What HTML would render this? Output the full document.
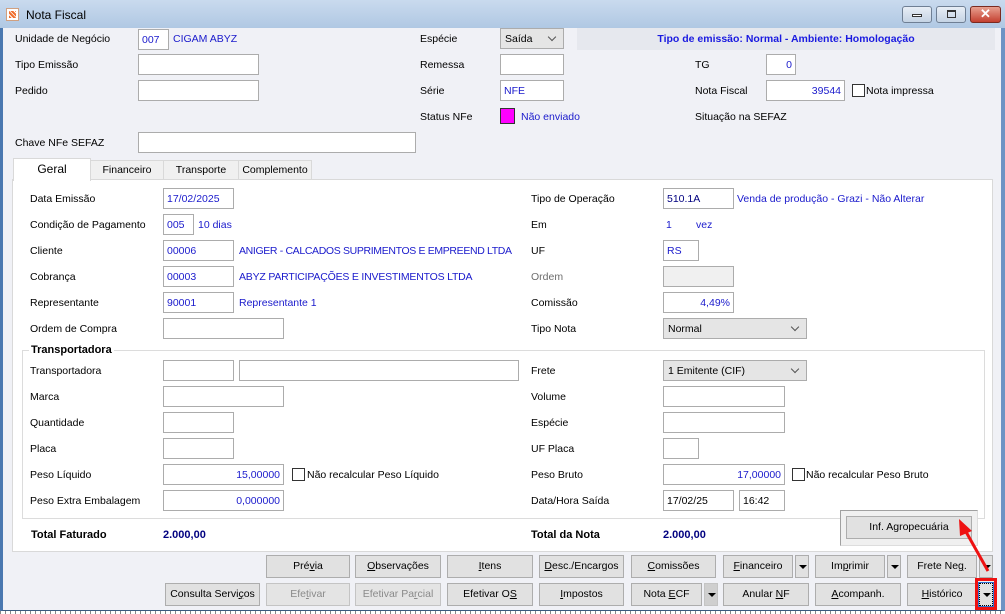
<!DOCTYPE html>
<html><head><meta charset="utf-8">
<style>
*{box-sizing:border-box;margin:0;padding:0}
body{width:1005px;height:614px;overflow:hidden;background:#fff;font-family:"Liberation Sans",sans-serif;font-size:10.5px;color:#000;position:relative}
.a{position:absolute;white-space:nowrap}
.win{position:absolute;left:0;top:0;width:1005px;height:611px;background:#f0f1f6;border:1px solid #3a5a80;border-left:3px solid #4a78b0;border-right:4px solid #6d93c4}
.tb{position:absolute;left:0;top:0;width:1005px;height:28px;background:linear-gradient(#c9daee,#b0c8e3)}
.in{position:absolute;height:21px;background:#fff;border:1px solid #acacac;color:#1a1acc;padding:0 3px;line-height:21px;white-space:nowrap}
.r{text-align:right}
.l{position:absolute;white-space:nowrap;transform:translateY(-50%)}
.blue{color:#1a1acc}
.sel{position:absolute;height:21px;background:#e5e5e5;border:1px solid #acacac;padding:0 4px;line-height:20px}
.sel:after{content:"";position:absolute;right:8px;top:5px;width:5px;height:5px;border-right:1px solid #555;border-bottom:1px solid #555;transform:rotate(45deg)}
.cb{position:absolute;width:13px;height:13px;border:1px solid #333;background:#fff}
.btn{position:absolute;height:23px;background:#e1e1e1;border:1px solid #adadad;text-align:center;line-height:21px;white-space:nowrap}
.dis{color:#8a8a8a;background:#e4e4e4;border-color:#c4c4c4}
.dd{position:absolute;width:14px;height:23px;background:#e1e1e1;border:1px solid #adadad}
.dd:after{content:"";position:absolute;left:3px;top:9px;border-left:4px solid transparent;border-right:4px solid transparent;border-top:4px solid #000}
.tab{position:absolute;top:160px;height:20px;background:#f0f0f0;border:1px solid #d9d9d9;text-align:center;line-height:18px}
.wb{position:absolute;top:6px;height:17px;border:1px solid #6f7f94;border-radius:3px;background:linear-gradient(#e8eef6,#c5d3e4)}
</style></head><body>
<div class="win"></div>
<div class="tb"></div>
<div class="a" style="left:6px;top:8px;width:13px;height:13px;background:#fff;border:1px solid #d0a080"><div style="margin:2px;width:7px;height:7px;background:repeating-linear-gradient(45deg,#f07030 0 2px,#fff 2px 3px)"></div></div>
<div class="a" style="left:26px;top:8px;font-size:12px">Nota Fiscal</div>
<div class="wb" style="left:902px;width:30px"><div style="margin:7px auto 0;width:10px;height:3px;border:1px solid #333;background:#fff"></div></div>
<div class="wb" style="left:936px;width:30px"><div style="margin:3px auto 0;width:9px;height:8px;border:1px solid #333;border-top-width:2px"></div></div>
<div class="wb" style="left:970px;width:31px;background:linear-gradient(#e8a090,#c44030);border-color:#7a2a20;color:#fff;text-align:center;font-weight:bold;font-size:13px;line-height:14px">✕</div>

<div class="l" style="left:15px;top:39px">Unidade de Negócio</div>
<div class="in" style="left:138px;top:29px;width:31px">007</div>
<div class="l blue" style="left:173px;top:39px">CIGAM ABYZ</div>
<div class="l" style="left:420px;top:39px">Espécie</div>
<div class="sel" style="left:500px;top:28px;width:64px">Saída</div>
<div class="a" style="left:577px;top:28px;width:418px;height:22px;background:#e6e8ee;color:#1a1ae0;font-weight:bold;text-align:center;line-height:22px">Tipo de emissão: Normal - Ambiente: Homologação</div>

<div class="l" style="left:15px;top:65px">Tipo Emissão</div>
<div class="in" style="left:138px;top:54px;width:121px"></div>
<div class="l" style="left:420px;top:65px">Remessa</div>
<div class="in" style="left:500px;top:54px;width:64px"></div>
<div class="l" style="left:695px;top:65px">TG</div>
<div class="in r" style="left:766px;top:54px;width:30px">0</div>

<div class="l" style="left:15px;top:91px">Pedido</div>
<div class="in" style="left:138px;top:80px;width:121px"></div>
<div class="l" style="left:420px;top:91px">Série</div>
<div class="in" style="left:500px;top:80px;width:64px">NFE</div>
<div class="l" style="left:695px;top:91px">Nota Fiscal</div>
<div class="in r" style="left:766px;top:80px;width:79px">39544</div>
<div class="cb" style="left:852px;top:84px"></div>
<div class="l" style="left:866px;top:91px">Nota impressa</div>

<div class="l" style="left:420px;top:117px">Status NFe</div>
<div class="a" style="left:500px;top:108px;width:15px;height:16px;background:#ff00ff;border:1px solid #333"></div>
<div class="l blue" style="left:521px;top:117px">Não enviado</div>
<div class="l" style="left:695px;top:117px">Situação na SEFAZ</div>

<div class="l" style="left:15px;top:143px">Chave NFe SEFAZ</div>
<div class="in" style="left:138px;top:132px;width:278px"></div>

<div class="a" style="left:12px;top:179px;width:981px;height:373px;background:#fff;border:1px solid #d9d9d9"></div>
<div class="tab" style="left:90px;width:74px">Financeiro</div>
<div class="tab" style="left:163px;width:76px">Transporte</div>
<div class="tab" style="left:238px;width:74px">Complemento</div>
<div class="tab" style="left:13px;top:158px;width:78px;height:23px;background:#fff;border-bottom:none;line-height:20px;font-size:12px">Geral</div>

<div class="l" style="left:30px;top:199px">Data Emissão</div>
<div class="in" style="left:163px;top:188px;width:71px">17/02/2025</div>
<div class="l" style="left:531px;top:199px">Tipo de Operação</div>
<div class="in" style="left:663px;top:188px;width:71px;color:#000080">510.1A</div>
<div class="l blue" style="left:737px;top:199px">Venda de produção - Grazi - Não Alterar</div>

<div class="l" style="left:30px;top:225px">Condição de Pagamento</div>
<div class="in" style="left:163px;top:214px;width:31px">005</div>
<div class="l blue" style="left:198px;top:225px">10 dias</div>
<div class="l" style="left:531px;top:225px">Em</div>
<div class="l blue" style="left:666px;top:225px">1</div>
<div class="l blue" style="left:696px;top:225px">vez</div>

<div class="l" style="left:30px;top:251px">Cliente</div>
<div class="in" style="left:163px;top:240px;width:71px">00006</div>
<div class="l blue" style="left:239px;top:251px;letter-spacing:-0.35px">ANIGER - CALCADOS SUPRIMENTOS E EMPREEND LTDA</div>
<div class="l" style="left:531px;top:251px">UF</div>
<div class="in" style="left:663px;top:240px;width:36px">RS</div>

<div class="l" style="left:30px;top:277px">Cobrança</div>
<div class="in" style="left:163px;top:266px;width:71px">00003</div>
<div class="l blue" style="left:239px;top:277px;letter-spacing:-0.2px">ABYZ PARTICIPAÇÕES E INVESTIMENTOS LTDA</div>
<div class="l" style="left:531px;top:277px;color:#6d6d6d">Ordem</div>
<div class="in" style="left:663px;top:266px;width:71px;background:#f0f0f0"></div>

<div class="l" style="left:30px;top:303px">Representante</div>
<div class="in" style="left:163px;top:292px;width:71px">90001</div>
<div class="l blue" style="left:239px;top:303px">Representante 1</div>
<div class="l" style="left:531px;top:303px">Comissão</div>
<div class="in r" style="left:663px;top:292px;width:71px">4,49%</div>

<div class="l" style="left:30px;top:329px">Ordem de Compra</div>
<div class="in" style="left:163px;top:318px;width:121px"></div>
<div class="l" style="left:531px;top:329px">Tipo Nota</div>
<div class="sel" style="left:663px;top:318px;width:144px">Normal</div>

<div class="a" style="left:22px;top:350px;width:963px;height:169px;border:1px solid #dcdcdc"></div>
<div class="a" style="left:29px;top:344px;background:#fff;padding:0 2px;font-weight:bold;font-size:11px">Transportadora</div>

<div class="l" style="left:30px;top:371px">Transportadora</div>
<div class="in" style="left:163px;top:360px;width:71px"></div>
<div class="in" style="left:239px;top:360px;width:280px"></div>
<div class="l" style="left:531px;top:371px">Frete</div>
<div class="sel" style="left:663px;top:360px;width:144px">1 Emitente (CIF)</div>

<div class="l" style="left:30px;top:397px">Marca</div>
<div class="in" style="left:163px;top:386px;width:121px"></div>
<div class="l" style="left:531px;top:397px">Volume</div>
<div class="in" style="left:663px;top:386px;width:122px"></div>

<div class="l" style="left:30px;top:423px">Quantidade</div>
<div class="in" style="left:163px;top:412px;width:71px"></div>
<div class="l" style="left:531px;top:423px">Espécie</div>
<div class="in" style="left:663px;top:412px;width:122px"></div>

<div class="l" style="left:30px;top:449px">Placa</div>
<div class="in" style="left:163px;top:438px;width:71px"></div>
<div class="l" style="left:531px;top:449px">UF Placa</div>
<div class="in" style="left:663px;top:438px;width:36px"></div>

<div class="l" style="left:30px;top:475px">Peso Líquido</div>
<div class="in r" style="left:163px;top:464px;width:121px">15,00000</div>
<div class="cb" style="left:292px;top:468px"></div>
<div class="l" style="left:307px;top:475px">Não recalcular Peso Líquido</div>
<div class="l" style="left:531px;top:475px">Peso Bruto</div>
<div class="in r" style="left:663px;top:464px;width:122px">17,00000</div>
<div class="cb" style="left:792px;top:468px"></div>
<div class="l" style="left:806px;top:475px">Não recalcular Peso Bruto</div>

<div class="l" style="left:30px;top:501px">Peso Extra Embalagem</div>
<div class="in r" style="left:163px;top:490px;width:121px">0,000000</div>
<div class="l" style="left:531px;top:501px">Data/Hora Saída</div>
<div class="in" style="left:663px;top:490px;width:71px;color:#000">17/02/25</div>
<div class="in" style="left:739px;top:490px;width:46px;color:#000">16:42</div>

<div class="l" style="left:31px;top:535px;font-weight:bold;font-size:11px">Total Faturado</div>
<div class="l" style="left:163px;top:535px;font-weight:bold;color:#000080;font-size:11px">2.000,00</div>
<div class="l" style="left:531px;top:535px;font-weight:bold;font-size:11px">Total da Nota</div>
<div class="l" style="left:663px;top:535px;font-weight:bold;color:#000080;font-size:11px">2.000,00</div>

<div class="a" style="left:840px;top:510px;width:138px;height:36px;background:#f0f0f0;border:1px solid #a0a0a0;border-right-color:#ddd;border-bottom-color:#ddd"></div>
<div class="btn" style="left:846px;top:516px;width:126px">Inf. Agropecuária</div>

<div class="btn" style="left:266px;top:555px;width:84px">Pré<u>v</u>ia</div>
<div class="btn" style="left:355px;top:555px;width:86px"><u>O</u>bservações</div>
<div class="btn" style="left:447px;top:555px;width:86px"><u>I</u>tens</div>
<div class="btn" style="left:539px;top:555px;width:85px"><u>D</u>esc./Encargos</div>
<div class="btn" style="left:631px;top:555px;width:85px"><u>C</u>omissões</div>
<div class="btn" style="left:723px;top:555px;width:70px"><u>F</u>inanceiro</div>
<div class="dd" style="left:795px;top:555px"></div>
<div class="btn" style="left:815px;top:555px;width:70px">Im<u>p</u>rimir</div>
<div class="dd" style="left:887px;top:555px"></div>
<div class="btn" style="left:907px;top:555px;width:70px">Frete Ne<u>g</u>.</div>
<div class="dd" style="left:979px;top:555px"></div>

<div class="btn" style="left:165px;top:583px;width:95px">Consulta Servi<u>ç</u>os</div>
<div class="btn dis" style="left:266px;top:583px;width:84px">Efe<u>t</u>ivar</div>
<div class="btn dis" style="left:355px;top:583px;width:86px">Efetivar Pa<u>r</u>cial</div>
<div class="btn" style="left:447px;top:583px;width:86px">Efetivar O<u>S</u></div>
<div class="btn" style="left:539px;top:583px;width:85px"><u>I</u>mpostos</div>
<div class="btn" style="left:631px;top:583px;width:71px">Nota <u>E</u>CF</div>
<div class="dd" style="left:704px;top:583px;background:#cfcfcf;border-color:#c4c4c4"></div>
<div class="btn" style="left:723px;top:583px;width:86px">Anular <u>N</u>F</div>
<div class="btn" style="left:815px;top:583px;width:86px"><u>A</u>companh.</div>
<div class="btn" style="left:907px;top:583px;width:70px"><u>H</u>istórico</div>
<div class="dd" style="left:979px;top:583px;border:1px dotted #000;outline:1px solid #3070d0"></div>
<div class="a" style="left:975px;top:578px;width:22px;height:32px;border:3px solid #ee1111"></div>
<svg class="a" style="left:940px;top:505px" width="60" height="75"><line x1="48" y1="66" x2="25" y2="25" stroke="#ee1111" stroke-width="3"/><polygon points="19,14 32,26 20,31" fill="#ee1111"/></svg>
<div class="a" style="left:0;top:611px;width:1005px;height:3px;background:repeating-linear-gradient(90deg,#888 0 1px,#fff 1px 5px)"></div>
</body></html>
